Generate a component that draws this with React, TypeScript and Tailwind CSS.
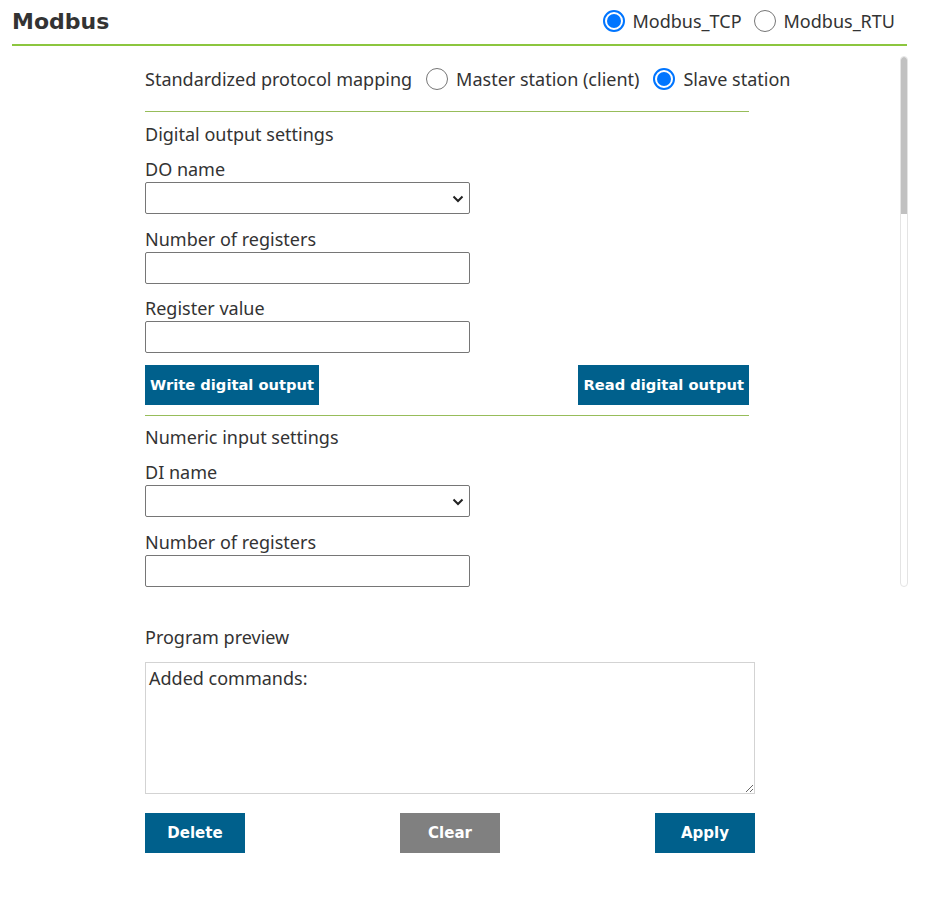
import { useState } from 'react';

function Radio({ checked, label, onClick }: { checked: boolean; label: string; onClick?: () => void }) {
  return (
    <label className="flex cursor-pointer items-center gap-2 whitespace-nowrap" onClick={onClick}>
      {checked ? (
        <span className="flex h-[22px] w-[22px] shrink-0 items-center justify-center rounded-full border-2 border-[#0075ff] bg-white">
          <span className="h-[14px] w-[14px] rounded-full bg-[#0075ff]" />
        </span>
      ) : (
        <span className="h-[22px] w-[22px] shrink-0 rounded-full border border-[#767676] bg-white" />
      )}
      <span>{label}</span>
    </label>
  );
}

function Chevron() {
  return (
    <svg width="12" height="8" viewBox="0 0 12 8" className="pointer-events-none absolute right-[6px] top-[13px]">
      <path d="M1.5 1.5 6 6l4.5-4.5" fill="none" stroke="#222" strokeWidth="2" />
    </svg>
  );
}

function SelectField({ label }: { label: string }) {
  return (
    <div className="mt-[11px]">
      <div className="leading-[24px]">{label}</div>
      <div className="relative mt-px w-[325px]">
        <select className="h-[32px] w-full appearance-none rounded-[2px] border border-[#767676] bg-white px-1">
          <option value=""></option>
        </select>
        <Chevron />
      </div>
    </div>
  );
}

function InputField({ label, first }: { label: string; first?: boolean }) {
  return (
    <div className={first ? 'mt-[13px]' : 'mt-[12px]'}>
      <div className="leading-[24px]">{label}</div>
      <input className="mt-px h-[32px] w-[325px] rounded-[2px] border border-[#767676] bg-white px-1" />
    </div>
  );
}

function BlueButton({ children, gray }: { children: React.ReactNode; gray?: boolean }) {
  return (
    <button
      className={
        (gray ? 'bg-[#808080] ' : 'bg-[#00608c] ') +
        "h-[40px] px-[5px] text-[14.7px] font-bold text-white [font-family:'DejaVu_Sans',Verdana,sans-serif]"
      }
    >
      {children}
    </button>
  );
}

function Section({ title, name, kind }: { title: string; name: string; kind: string }) {
  return (
    <>
      <hr className="mt-[10px] border-t border-[#97bd5a]" />
      <div className="mt-[9px] leading-[24px]">{title}</div>
      <SelectField label={name} />
      <InputField label="Number of registers" first />
      <InputField label="Register value" />
      <div className="mt-[12px] flex justify-between">
        <BlueButton>Write {kind}</BlueButton>
        <BlueButton>Read {kind}</BlueButton>
      </div>
    </>
  );
}

export default function App() {
  const [tcp, setTcp] = useState(true);
  const [slave, setSlave] = useState(true);

  return (
    <div className="min-h-screen bg-white text-[18px] text-[#333] [font-family:'Noto_Sans',sans-serif]">
      {/* Header */}
      <div className="ml-[12px] flex h-[46px] w-[895px] items-center justify-between border-b-2 border-[#8cc63f] pb-[2px] pr-3">
        <h1 className="text-[22px] font-bold text-[#333] [font-family:'DejaVu_Sans',Verdana,sans-serif]">Modbus</h1>
        <div className="flex items-center gap-[12px]">
          <Radio checked={tcp} label="Modbus_TCP" onClick={() => setTcp(true)} />
          <Radio checked={!tcp} label="Modbus_RTU" onClick={() => setTcp(false)} />
        </div>
      </div>

      {/* Scrollable settings */}
      <div className="ml-[12px] mt-[10px] flex h-[531px] w-[896px]">
        <div className="h-full flex-1 overflow-hidden pl-[133px]">
          <div className="w-[604px] pb-[40px]">
            <div className="mt-[10px] flex h-[26px] w-max items-center gap-[14px] whitespace-nowrap">
              <span>Standardized protocol mapping</span>
              <Radio checked={!slave} label="Master station (client)" onClick={() => setSlave(false)} />
              <Radio checked={slave} label="Slave station" onClick={() => setSlave(true)} />
            </div>
            <hr className="mt-[19px] border-t border-[#97bd5a]" />

            <div className="mt-[10px] leading-[24px]">Digital output settings</div>
            <SelectField label="DO name" />
            <InputField label="Number of registers" first />
            <InputField label="Register value" />
            <div className="mt-[12px] flex justify-between">
              <BlueButton>Write digital output</BlueButton>
              <BlueButton>Read digital output</BlueButton>
            </div>

            <Section title="Numeric input settings" name="DI name" kind="numeric input" />
            <Section title="Analog output settings" name="AO name" kind="analog output" />
            <Section title="Holding register settings" name="Register name" kind="holding register" />
          </div>
        </div>
        {/* scrollbar */}
        <div className="flex h-full w-[8px] flex-col overflow-hidden rounded-[4px] border border-[#e4e4e4] bg-white">
          <div className="h-[157px] shrink-0 rounded-t-[4px] bg-[#c1c1c1]" />
        </div>
      </div>

      {/* Program preview */}
      <div className="ml-[145px] w-[610px]">
        <div className="mt-[38px] leading-[24px]">Program preview</div>
        <textarea
          className="mt-[13px] block h-[132px] w-[610px] border border-[#d3d3d3] px-[3px] py-[2px] text-[18px] text-[#333] outline-none"
          defaultValue="Added commands:"
        />
        <div className="mt-[19px] flex justify-between">
          <button className="h-[40px] w-[100px] bg-[#00608c] text-[15px] font-bold text-white [font-family:'DejaVu_Sans',Verdana,sans-serif]">Delete</button>
          <button className="h-[40px] w-[100px] bg-[#808080] text-[15px] font-bold text-white [font-family:'DejaVu_Sans',Verdana,sans-serif]">Clear</button>
          <button className="h-[40px] w-[100px] bg-[#00608c] text-[15px] font-bold text-white [font-family:'DejaVu_Sans',Verdana,sans-serif]">Apply</button>
        </div>
      </div>
    </div>
  );
}
